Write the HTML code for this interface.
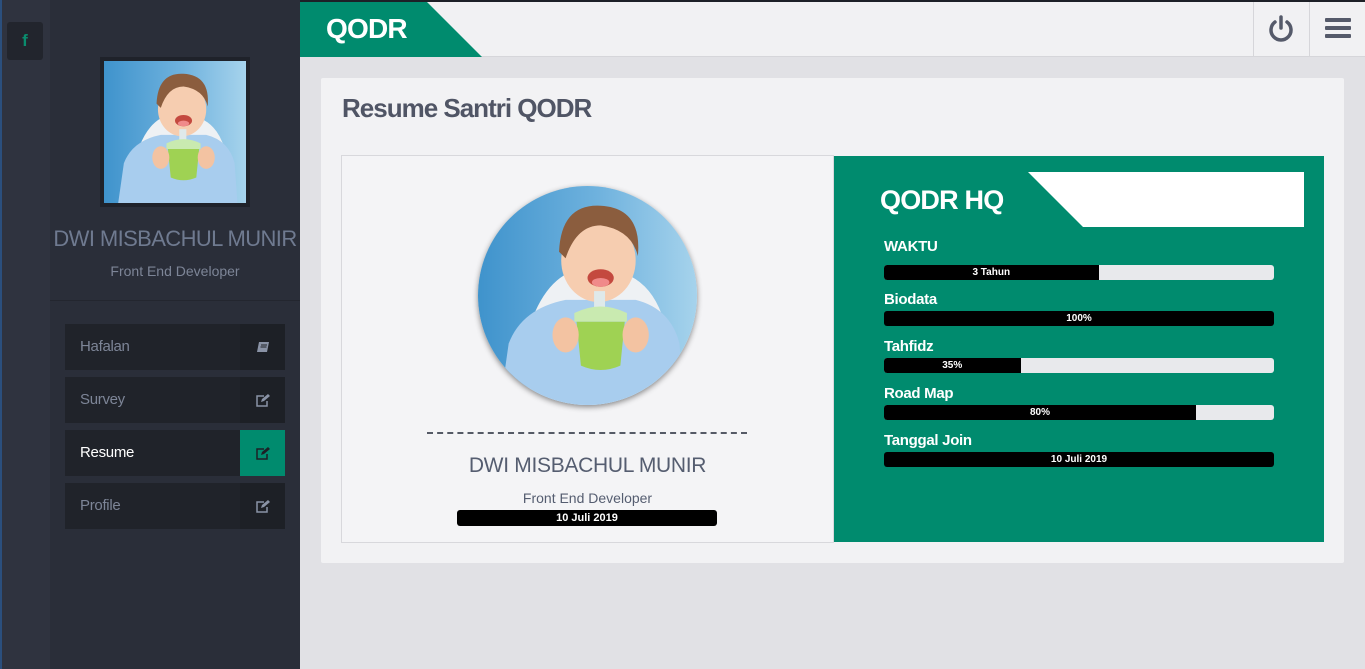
<!DOCTYPE html>
<html><head><meta charset="utf-8"><style>
*{margin:0;padding:0;box-sizing:border-box}
body{width:1365px;height:669px;overflow:hidden;background:#e1e1e5;font-family:"Liberation Sans",sans-serif;position:relative}
.abs{position:absolute}
.strip{left:0;top:0;width:50px;height:669px;background:#2f333f;border-left:2px solid #2b4f7d}
.fb{left:7px;top:22px;width:36px;height:38px;background:#22252d;border-radius:3px;color:#0a8c6d;font-weight:bold;font-size:17px;text-align:center;line-height:38px}
.side{left:50px;top:0;width:250px;height:669px;background:#2a2e39}
.topline{left:0;top:0;width:1365px;height:2px;background:#1d2027}
.menu{left:65px;width:220px;height:46px;background:#20232a;color:#7d8597;font-size:15px;line-height:46px;padding-left:15px;letter-spacing:-.3px}
.menu .ic{position:absolute;right:0;top:0;width:45px;height:46px;background:#1d2026;display:flex;align-items:center;justify-content:center}
.hdr{left:300px;top:2px;width:1065px;height:55px;background:#f1f1f3;border-bottom:1px solid #d6d6da}
.bar{left:884px;width:390px;height:15px;background:#e8e9ec;border-radius:3px;overflow:hidden}
.bar div{height:100%;background:#000;color:#fff;font-size:10px;font-weight:bold;text-align:center;line-height:15px}
.lbl{left:884px;color:#fff;font-size:15px;font-weight:bold;letter-spacing:-.3px}
</style></head><body>
<svg width="0" height="0" style="position:absolute"><defs>
<linearGradient id="bg" x1="0" x2="1"><stop offset="0" stop-color="#3f93cc"/><stop offset=".55" stop-color="#6fb2de"/><stop offset="1" stop-color="#a6d3ec"/></linearGradient>
<g id="baby">
<rect width="100" height="100" fill="url(#bg)"/>
<path d="M22 100 L25 60 Q35 35 55 38 Q78 38 85 62 L88 100Z" fill="#eef1f4"/>
<path d="M10 100 L14 72 Q20 56 40 52 L72 52 Q88 56 92 72 L94 100Z" fill="#a8cdee"/>
<ellipse cx="55" cy="34" rx="17" ry="19" fill="#f6cdb0"/>
<path d="M37 30 Q38 8 56 9 Q75 10 73 32 Q70 20 56 18 Q45 18 40 33Z" fill="#8b5d3e"/>
<ellipse cx="56" cy="42" rx="6" ry="4" fill="#c4493f"/>
<ellipse cx="56" cy="44" rx="4" ry="2" fill="#f08a8a"/>
<rect x="53" y="48" width="5" height="8" fill="#dfe9ea"/>
<path d="M44 58 Q56 52 68 58 L68 62 L44 62Z" fill="#c9eab0"/>
<path d="M45 62 L67 62 L65 82 Q56 86 47 82Z" fill="#9fd253"/>
<ellipse cx="40" cy="68" rx="6" ry="8" fill="#f3c3a2"/>
<ellipse cx="72" cy="68" rx="6" ry="8" fill="#f3c3a2"/>
</g></defs></svg>

<div class="abs topline"></div>
<div class="abs strip"></div>
<div class="abs fb">f</div>
<div class="abs side"></div>
<div class="abs" style="left:100px;top:57px;width:150px;height:150px;background:#1f222a;padding:4px"><svg width="142" height="142" viewBox="0 0 100 100"><use href="#baby"/></svg></div>
<div class="abs" style="left:50px;top:226px;width:250px;text-align:center;color:#6f7a90;font-size:22px;letter-spacing:-.6px;white-space:nowrap">DWI MISBACHUL MUNIR</div>
<div class="abs" style="left:50px;top:263px;width:250px;text-align:center;color:#7d8597;font-size:14px">Front End Developer</div>
<div class="abs" style="left:50px;top:300px;width:250px;height:1px;background:#23262f"></div>

<div class="abs menu" style="top:324px">Hafalan<div class="ic"><svg width="14" height="13" viewBox="0 0 14 13"><path d="M3 1h10l-2 10H1z" fill="#8a93a6"/><path d="M5 4h6M4.5 6h6" stroke="#1d2026" stroke-width="1"/></svg></div></div>
<div class="abs menu" style="top:377px">Survey<div class="ic"><svg width="15" height="13" viewBox="0 0 15 13"><path d="M9 2H2v10h10V7" fill="none" stroke="#8a93a6" stroke-width="1.5"/><path d="M6 8l1-3 6-5 2 2-6 5z" fill="#8a93a6"/></svg></div></div>
<div class="abs menu" style="top:430px;color:#fff">Resume<div class="ic" style="background:#008b6e"><svg width="15" height="13" viewBox="0 0 15 13"><path d="M9 2H2v10h10V7" fill="none" stroke="#1d2026" stroke-width="1.5"/><path d="M6 8l1-3 6-5 2 2-6 5z" fill="#1d2026"/></svg></div></div>
<div class="abs menu" style="top:483px">Profile<div class="ic"><svg width="15" height="13" viewBox="0 0 15 13"><path d="M9 2H2v10h10V7" fill="none" stroke="#8a93a6" stroke-width="1.5"/><path d="M6 8l1-3 6-5 2 2-6 5z" fill="#8a93a6"/></svg></div></div>

<div class="abs hdr"></div>
<svg class="abs" style="left:300px;top:2px" width="182" height="55"><path d="M0 0H127L182 55H0Z" fill="#008b6e"/></svg>
<div class="abs" style="left:326px;top:13px;color:#fff;font-size:28px;font-weight:bold;letter-spacing:-.8px">QODR</div>
<div class="abs" style="left:1253px;top:2px;width:1px;height:55px;background:#d6d6da"></div>
<div class="abs" style="left:1309px;top:2px;width:1px;height:55px;background:#d6d6da"></div>
<svg class="abs" style="left:1267px;top:14px" width="28" height="30" viewBox="0 0 28 30"><path d="M8 8A10 10 0 1 0 20 8" fill="none" stroke="#555a6a" stroke-width="3.5" stroke-linecap="round"/><path d="M14 3V14" stroke="#555a6a" stroke-width="3.5" stroke-linecap="round"/></svg>
<svg class="abs" style="left:1325px;top:17px" width="27" height="24"><rect y="1" width="26" height="4" rx="1" fill="#555a6a"/><rect y="9" width="26" height="4" rx="1" fill="#555a6a"/><rect y="17" width="26" height="4" rx="1" fill="#555a6a"/></svg>

<div class="abs" style="left:321px;top:78px;width:1023px;height:485px;background:#f2f2f4;border-radius:2px"></div>
<div class="abs" style="left:342px;top:93px;color:#505565;font-size:26px;font-weight:bold;letter-spacing:-1px">Resume Santri QODR</div>
<div class="abs" style="left:341px;top:155px;width:493px;height:388px;background:#f4f4f6;border:1px solid #d8d8dc"></div>
<div class="abs" style="left:478px;top:186px;width:219px;height:219px;border-radius:50%;overflow:hidden;box-shadow:0 2px 6px rgba(0,0,0,.45)"><svg width="219" height="219" viewBox="0 0 100 100"><use href="#baby"/></svg></div>
<div class="abs" style="left:427px;top:432px;width:320px;border-top:2px dashed #555a66"></div>
<div class="abs" style="left:341px;top:454px;width:493px;text-align:center;color:#555d70;font-size:21px;letter-spacing:-.3px">DWI MISBACHUL MUNIR</div>
<div class="abs" style="left:341px;top:490px;width:493px;text-align:center;color:#555d70;font-size:14px">Front End Developer</div>
<div class="abs" style="left:457px;top:510px;width:260px;height:16px;background:#000;border-radius:3px;color:#fff;font-size:11px;font-weight:bold;text-align:center;line-height:16px">10 Juli 2019</div>

<div class="abs" style="left:834px;top:156px;width:490px;height:386px;background:#008b6e"></div>
<svg class="abs" style="left:1028px;top:172px" width="276" height="55"><path d="M0 0H276V55H55Z" fill="#fff"/></svg>
<div class="abs" style="left:880px;top:185px;color:#fff;font-size:27px;font-weight:bold;letter-spacing:-.8px">QODR HQ</div>
<div class="abs lbl" style="top:238px">WAKTU</div>
<div class="abs bar" style="top:265px"><div style="width:55%">3 Tahun</div></div>
<div class="abs lbl" style="top:291px">Biodata</div>
<div class="abs bar" style="top:311px"><div style="width:100%">100%</div></div>
<div class="abs lbl" style="top:338px">Tahfidz</div>
<div class="abs bar" style="top:358px"><div style="width:35%">35%</div></div>
<div class="abs lbl" style="top:385px">Road Map</div>
<div class="abs bar" style="top:405px"><div style="width:80%">80%</div></div>
<div class="abs lbl" style="top:432px">Tanggal Join</div>
<div class="abs bar" style="top:452px"><div style="width:100%">10 Juli 2019</div></div>
</body></html>
